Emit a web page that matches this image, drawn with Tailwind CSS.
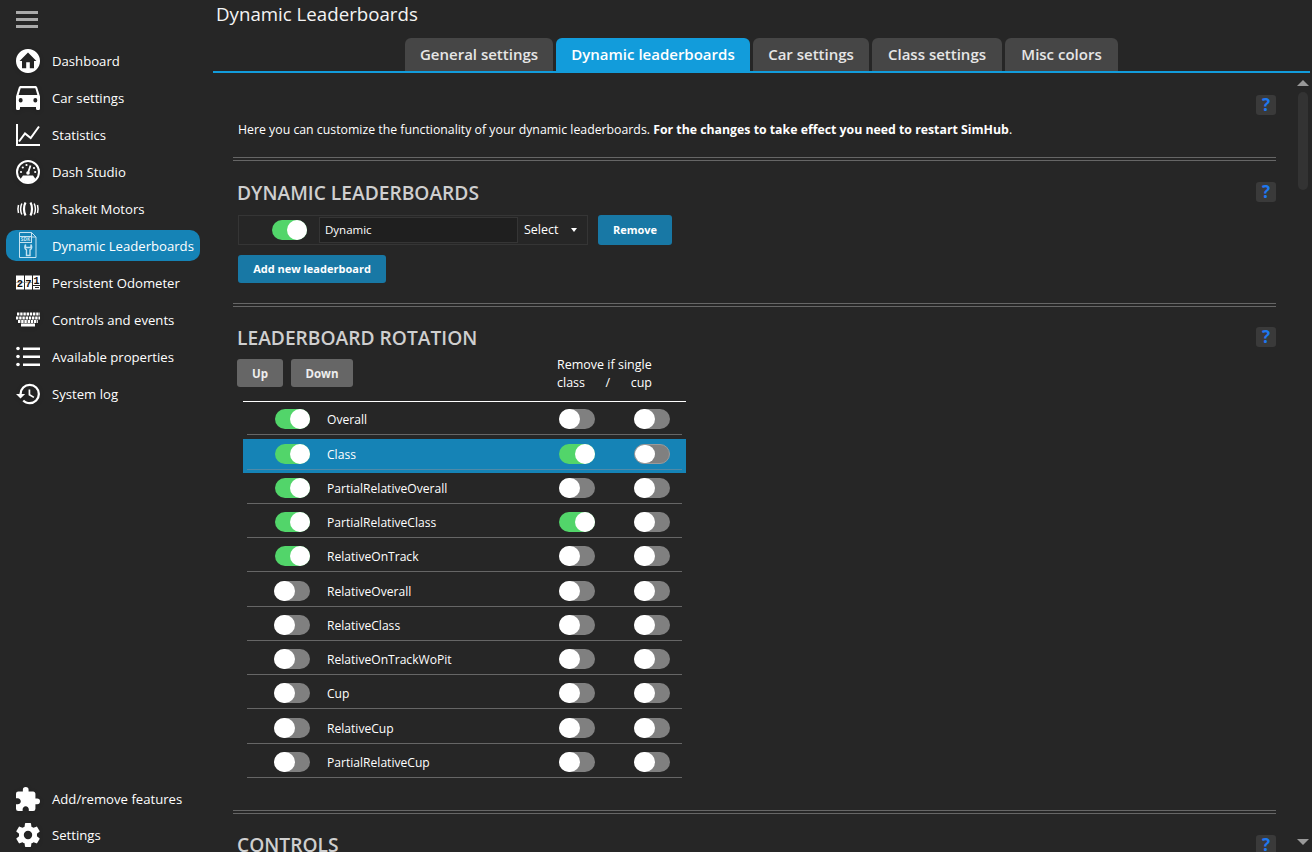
<!DOCTYPE html>
<html><head><meta charset="utf-8"><script src="https://cdn.jsdelivr.net/npm/@tailwindcss/browser@4"></script></head>
<body class="m-0 bg-[#262626] overflow-hidden font-['Open_Sans',sans-serif]">
<div class="flex w-[1312px] h-[852px] overflow-hidden text-white text-[12.1px]">
  <!-- sidebar -->
  <aside class="w-[213px] shrink-0 flex flex-col text-[13.15px]">
    <div class="h-[42px] pl-[16px] pt-[11px]">
      <div class="w-[22px] flex flex-col gap-[4px]"><div class="h-[3px] bg-[#aaa]"></div><div class="h-[3px] bg-[#aaa]"></div><div class="h-[3px] bg-[#aaa]"></div></div>
    </div>
    <nav class="flex flex-col">
      <a class="h-[37px] pl-[16px] flex items-center gap-[12px]"><svg class="w-[24px] h-[24px] drop-shadow-sm" viewBox="2 2 20 20" fill="#fff"><path d="M19.07,4.93C17.22,3 14.66,1.96 12,2C9.34,1.96 6.79,3 4.94,4.93C3,6.78 1.96,9.34 2,12C1.96,14.66 3,17.21 4.93,19.06C6.78,21 9.34,22.04 12,22C14.66,22.04 17.21,21 19.06,19.07C21,17.22 22.04,14.66 22,12C22.04,9.34 21,6.78 19.07,4.93M17,12V18H13.5V13H10.5V18H7V12H5L12,5L19,12H17Z"/></svg><span class="pt-[2px]">Dashboard</span></a>
      <a class="h-[37px] pl-[16px] flex items-center gap-[12px]"><svg class="w-[24px] h-[24px] drop-shadow-sm" viewBox="3 5 18 16" preserveAspectRatio="none" fill="#fff"><path d="M5,11L6.5,6.5H17.5L19,11M17.5,16A1.5,1.5 0 0,1 16,14.5A1.5,1.5 0 0,1 17.5,13A1.5,1.5 0 0,1 19,14.5A1.5,1.5 0 0,1 17.5,16M6.5,16A1.5,1.5 0 0,1 5,14.5A1.5,1.5 0 0,1 6.5,13A1.5,1.5 0 0,1 8,14.5A1.5,1.5 0 0,1 6.5,16M18.92,6C18.72,5.42 18.16,5 17.5,5H6.5C5.84,5 5.28,5.42 5.08,6L3,12V20A1,1 0 0,0 4,21H5A1,1 0 0,0 6,20V19H18V20A1,1 0 0,0 19,21H20A1,1 0 0,0 21,20V12L18.92,6Z"/></svg><span class="pt-[2px]">Car settings</span></a>
      <a class="h-[37px] pl-[16px] flex items-center gap-[12px]"><svg class="w-[24px] h-[24px]" viewBox="0 0 24 24" fill="none" stroke="#fff"><path stroke-width="2" d="M1 1V22H24"/><path stroke-width="2" d="M3 18.500L9 10.500L14.700 15L23 3.500"/></svg><span class="pt-[2px]">Statistics</span></a>
      <a class="h-[37px] pl-[16px] flex items-center gap-[12px]"><svg class="w-[24px] h-[24px] drop-shadow-sm" viewBox="0 0 24 24"><circle cx="12" cy="12" r="11" fill="none" stroke="#fff" stroke-width="2"/><path d="M4.500 19A10 10 0 0 0 19.500 19L17 15.500H7Z" fill="#fff"/><path d="M12 13L14.500 5.500" stroke="#fff" stroke-width="1.800"/><circle cx="12" cy="13" r="1.800" fill="#fff"/><g fill="#fff"><circle cx="5" cy="12" r="1.100"/><circle cx="6.800" cy="7.500" r="1.100"/><circle cx="10.500" cy="5" r="1.100"/><circle cx="18" cy="8" r="1.100"/><circle cx="19.200" cy="12" r="1.100"/></g></svg><span class="pt-[2px]">Dash Studio</span></a>
      <a class="h-[37px] pl-[16px] flex items-center gap-[12px]"><svg class="w-[24px] h-[24px]" viewBox="0 0 24 24" fill="none" stroke="#fff"><path stroke-width="2.200" d="M9.500 5.500C7.500 9 7.500 15 9.500 18.500M14.500 5.500C16.500 9 16.500 15 14.500 18.500"/><path stroke-width="1.500" d="M5.800 6.500C4.500 9.500 4.500 14.500 5.800 17.500M18.200 6.500C19.500 9.500 19.500 14.500 18.200 17.500M2.500 8C1.800 10.500 1.800 13.500 2.500 16M21.500 8C22.200 10.500 22.200 13.500 21.500 16"/></svg><span class="pt-[2px]">ShakeIt Motors</span></a>
      <a class="h-[31px] my-[3px] ml-[6px] w-[194px] pl-[10px] flex items-center gap-[12px] bg-[#1583b6] rounded-[10px]"><svg class="w-[24px] h-[28px]" viewBox="0 0 24 28" fill="none" stroke="#c4e2f0" stroke-width="1"><path d="M3.500 10.500V25.500H20V5L15.500 .5H3.500V4.500"/><path d="M15.500 .5V5H20"/><rect x="3.500" y="4.500" width="12" height="6"/><text x="9.500" y="9.300" text-anchor="middle" font-size="4.800" font-weight="700" fill="#c4e2f0" stroke="none" font-family="Open Sans">SDK</text><path stroke-width="1.400" d="M9.500 12.500C8 15.500 9.500 17.500 10.500 18V23.500H14V18C15 17.500 16.500 15.500 15 12.500V15.500H9.500Z"/></svg><span class="pt-[2px]">Dynamic Leaderboards</span></a>
      <a class="h-[37px] pl-[16px] flex items-center gap-[12px]"><svg class="w-[24px] h-[24px]" viewBox="0 0 24 24"><rect x="0" y="4.500" width="8" height="14" fill="#fff"/><rect x="9" y="4.500" width="7" height="14" fill="#fff"/><rect x="17" y="4.500" width="7" height="14" fill="#fff"/><path d="M0 11.500H16" stroke="#777" stroke-width=".5"/><path d="M17 14.500H24" stroke="#262626" stroke-width="1"/><path d="M19 16.500H23" stroke="#262626" stroke-width="1"/><text x="4" y="15.800" text-anchor="middle" font-size="10.500" font-weight="700" fill="#111" font-family="Liberation Mono">2</text><text x="12.500" y="15.800" text-anchor="middle" font-size="10.500" font-weight="700" fill="#111" font-family="Liberation Mono">7</text><text x="20.500" y="12.500" text-anchor="middle" font-size="10" font-weight="700" fill="#111" font-family="Liberation Mono">1</text></svg><span class="pt-[2px]">Persistent Odometer</span></a>
      <a class="h-[37px] pl-[16px] flex items-center gap-[12px]"><svg class="w-[24px] h-[24px] drop-shadow-sm" viewBox="0 0 24 24" fill="none" stroke="#fff"><path stroke-width="3" stroke-dasharray="2.400 .8" d="M1 6H24M0 10H24M2 13.500H22"/><path stroke-width="3" d="M5 17H19"/></svg><span class="pt-[2px]">Controls and events</span></a>
      <a class="h-[37px] pl-[16px] flex items-center gap-[12px]"><svg class="w-[24px] h-[24px]" viewBox="0 0 24 24" fill="#fff"><circle cx="2" cy="3.500" r="1.800"/><circle cx="2" cy="11.500" r="1.800"/><circle cx="2" cy="19.500" r="1.800"/><rect x="7" y="2.500" width="17" height="2.500"/><rect x="7" y="10.500" width="17" height="2.500"/><rect x="7" y="18.500" width="17" height="2.500"/></svg><span class="pt-[2px]">Available properties</span></a>
      <a class="h-[37px] pl-[16px] flex items-center gap-[12px]"><svg class="w-[24px] h-[24px] drop-shadow-sm" viewBox="1 3 21 18" fill="#fff"><path d="M13.5,8H12V13L16.28,15.54L17,14.33L13.5,12.25V8M13,3A9,9 0 0,0 4,12H1L4.96,16.03L9,12H6A7,7 0 0,1 13,5A7,7 0 0,1 20,12A7,7 0 0,1 13,19C11.07,19 9.32,18.21 8.06,16.94L6.64,18.36C8.27,20 10.5,21 13,21A9,9 0 0,0 22,12A9,9 0 0,0 13,3"/></svg><span class="pt-[2px]">System log</span></a>
    </nav>
    <div class="mt-auto flex flex-col">
      <a class="h-[37px] pl-[16px] flex items-center gap-[12px]"><svg class="w-[24px] h-[24px] drop-shadow-sm" viewBox="2 1 21 21" fill="#fff"><path d="M20.5,11H19V7C19,5.89 18.1,5 17,5H13V3.5A2.5,2.5 0 0,0 10.5,1A2.5,2.5 0 0,0 8,3.5V5H4A2,2 0 0,0 2,7V10.8H3.5C5,10.8 6.2,12 6.2,13.5C6.2,15 5,16.2 3.5,16.2H2V20A2,2 0 0,0 4,22H7.8V20.5C7.8,19 9,17.8 10.5,17.8C12,17.8 13.2,19 13.2,20.5V22H17A2,2 0 0,0 19,20V16H20.5A2.5,2.5 0 0,0 23,13.5A2.5,2.5 0 0,0 20.5,11Z"/></svg><span class="pt-[2px]">Add/remove features</span></a>
      <a class="h-[35px] pl-[16px] flex items-center gap-[12px]"><svg class="w-[24px] h-[24px] drop-shadow-sm" viewBox="2 2 20 20" fill="#fff"><path d="M12,15.5A3.5,3.5 0 0,1 8.5,12A3.5,3.5 0 0,1 12,8.5A3.5,3.5 0 0,1 15.5,12A3.5,3.5 0 0,1 12,15.5M19.43,12.97C19.47,12.65 19.5,12.33 19.5,12C19.5,11.67 19.47,11.34 19.43,11L21.54,9.37C21.73,9.22 21.78,8.95 21.66,8.73L19.66,5.27C19.54,5.05 19.27,4.96 19.05,5.05L16.56,6.05C16.04,5.66 15.5,5.32 14.87,5.07L14.5,2.42C14.46,2.18 14.25,2 14,2H10C9.75,2 9.54,2.18 9.5,2.42L9.13,5.07C8.5,5.32 7.96,5.66 7.44,6.05L4.95,5.05C4.73,4.96 4.46,5.05 4.34,5.27L2.34,8.73C2.21,8.95 2.27,9.22 2.46,9.37L4.57,11C4.53,11.34 4.5,11.67 4.5,12C4.5,12.33 4.53,12.65 4.57,12.97L2.46,14.63C2.27,14.78 2.21,15.05 2.34,15.27L4.34,18.73C4.46,18.95 4.73,19.03 4.95,18.95L7.44,17.94C7.96,18.34 8.5,18.68 9.13,18.93L9.5,21.58C9.54,21.82 9.75,22 10,22H14C14.25,22 14.46,21.82 14.5,21.58L14.87,18.93C15.5,18.67 16.04,18.34 16.56,17.94L19.05,18.95C19.27,19.03 19.54,18.95 19.66,18.73L21.66,15.27C21.78,15.05 21.73,14.78 21.54,14.63L19.43,12.97Z"/></svg><span class="pt-[2px]">Settings</span></a>
    </div>
  </aside>

  <!-- main -->
  <main class="flex-1 min-w-0 flex flex-col">
    <div class="h-[38px] pl-[3px] text-[18.7px] leading-[28px] text-[#f4f4f4]">Dynamic Leaderboards</div>
    <div class="w-[1097px] h-[35px] border-b-2 border-[#129cdb] flex justify-center gap-[3px] items-stretch text-[15px] font-semibold text-[#e6e6e6]">
      <div class="w-[148px] h-[33px] rounded-t-[6px] bg-[#464646] flex items-center justify-center">General settings</div>
      <div class="w-[194px] h-[33px] rounded-t-[6px] bg-[#129cdb] text-white flex items-center justify-center">Dynamic leaderboards</div>
      <div class="w-[116px] h-[33px] rounded-t-[6px] bg-[#464646] flex items-center justify-center">Car settings</div>
      <div class="w-[130px] h-[33px] rounded-t-[6px] bg-[#464646] flex items-center justify-center">Class settings</div>
      <div class="w-[113px] h-[33px] rounded-t-[6px] bg-[#464646] flex items-center justify-center">Misc colors</div>
    </div>
    <div class="flex flex-1 min-h-0 overflow-hidden">
      <div class="w-[1043px] ml-[20px] shrink-0 pt-[22px]">
        <div class="flex justify-end"><button class="w-[20px] h-[20px] rounded-[3px] bg-[#3a3a3a] text-[#1e78f0] font-bold text-[17px] leading-[20px]">?</button></div>
        <p class="mt-[5px] ml-[5px] h-[18px] pt-[1px] leading-[18px] text-[12.3px]">Here you can customize the functionality of your dynamic leaderboards. <b>For the changes to take effect you need to restart SimHub</b>.</p>

        <div class="mt-[19px] h-[4px] border-y border-[#666]"></div>
        <div class="mt-[17px] h-[28px] flex items-center justify-between"><h2 class="ml-[4px] pt-[2px] text-[19.2px] font-semibold text-[#cfcfcf]">DYNAMIC LEADERBOARDS</h2><button class="w-[20px] h-[20px] rounded-[3px] bg-[#3a3a3a] text-[#1e78f0] font-bold text-[17px] leading-[20px]">?</button></div>
        <div class="mt-[9px] ml-[5px] flex items-center gap-[10px]">
          <div class="w-[350px] h-[30px] border border-[#353535] flex items-center text-[12.5px]">
            <div class="w-[80px] flex justify-end pr-[12px]"><div class="w-[35px] h-[20px] rounded-full bg-[#52d56a] flex justify-end"><div class="w-[20px] h-[20px] rounded-full bg-white"></div></div></div>
            <div class="w-[199px] h-[26px] border border-[#353535] bg-[#1f1f1f] pl-[5px] leading-[24px] text-[11.5px]">Dynamic</div>
            <div class="flex-1 pl-[6px] pr-[10px] flex items-center justify-between"><span>Select</span><span class="w-0 h-0 border-x-[3.500px] border-x-transparent border-t-[4px] border-t-white"></span></div>
          </div>
          <button class="w-[74px] h-[30px] rounded-[3px] bg-[#1878a5] font-bold text-[11px] text-white">Remove</button>
        </div>
        <button class="block mt-[10px] ml-[5px] pt-[1px] w-[148px] h-[28px] rounded-[3px] bg-[#1878a5] font-bold text-[11px] text-white">Add new leaderboard</button>

        <div class="mt-[20px] h-[4px] border-y border-[#666]"></div>
        <div class="mt-[16px] h-[28px] flex items-center justify-between"><h2 class="ml-[4px] pt-[2px] text-[19.2px] font-semibold text-[#cfcfcf]">LEADERBOARD ROTATION</h2><button class="w-[20px] h-[20px] rounded-[3px] bg-[#3a3a3a] text-[#1e78f0] font-bold text-[17px] leading-[20px]">?</button></div>
        <div class="mt-[8px] ml-[4px] w-[449px] h-[28px] flex gap-[8px]">
          <button class="w-[46px] h-[28px] pt-[1px] rounded-[3px] bg-[#666] font-bold text-[11.5px] text-[#eee]">Up</button>
          <button class="w-[62px] h-[28px] pt-[1px] rounded-[3px] bg-[#666] font-bold text-[11.5px] text-[#eee]">Down</button>
          <div class="ml-[196px] -mt-[3px] w-[100px] text-[12.5px] leading-[18px]">
            <div class="whitespace-nowrap">Remove if single</div>
            <div class="flex justify-between w-[95px]"><span>class</span><span>/</span><span>cup</span></div>
          </div>
        </div>
        <div class="mt-[14px] ml-[10px] w-[443px] border-t border-white pt-[2.500px]">
          <div class="h-[34.250px] px-[4px] pb-[3.500px]"><div class="h-full border-b border-[#666] flex items-center"><div class="w-[28px]"></div><div class="w-[35px] h-[20px] rounded-full bg-[#52d56a] flex justify-end"><div class="w-[20px] h-[20px] rounded-full bg-white"></div></div><span class="ml-[17px] pt-[2px] w-[232px]">Overall</span><div class="w-[36px] h-[20px] rounded-full bg-[#808080]"><div class="w-[21px] h-[20px] rounded-full bg-white"></div></div><div class="w-[39px]"></div><div class="w-[36px] h-[20px] rounded-full bg-[#808080]"><div class="w-[21px] h-[20px] rounded-full bg-white"></div></div></div></div>
          <div class="h-[34.250px] px-[4px] pb-[3.500px] bg-[#1583b6]"><div class="h-full border-b border-[#4f8aa8] flex items-center"><div class="w-[28px]"></div><div class="w-[35px] h-[20px] rounded-full bg-[#52d56a] flex justify-end"><div class="w-[20px] h-[20px] rounded-full bg-white"></div></div><span class="ml-[17px] pt-[2px] w-[232px]">Class</span><div class="w-[36px] h-[20px] rounded-full bg-[#52d56a] flex justify-end"><div class="w-[20px] h-[20px] rounded-full bg-white"></div></div><div class="w-[39px]"></div><div class="w-[36px] h-[20px] rounded-full bg-[#808080] border border-[#9a9a9a]"><div class="w-[20px] h-[18px] rounded-full bg-white"></div></div></div></div>
          <div class="h-[34.250px] px-[4px] pb-[3.500px]"><div class="h-full border-b border-[#666] flex items-center"><div class="w-[28px]"></div><div class="w-[35px] h-[20px] rounded-full bg-[#52d56a] flex justify-end"><div class="w-[20px] h-[20px] rounded-full bg-white"></div></div><span class="ml-[17px] pt-[2px] w-[232px]">PartialRelativeOverall</span><div class="w-[36px] h-[20px] rounded-full bg-[#808080]"><div class="w-[21px] h-[20px] rounded-full bg-white"></div></div><div class="w-[39px]"></div><div class="w-[36px] h-[20px] rounded-full bg-[#808080]"><div class="w-[21px] h-[20px] rounded-full bg-white"></div></div></div></div>
          <div class="h-[34.250px] px-[4px] pb-[3.500px]"><div class="h-full border-b border-[#666] flex items-center"><div class="w-[28px]"></div><div class="w-[35px] h-[20px] rounded-full bg-[#52d56a] flex justify-end"><div class="w-[20px] h-[20px] rounded-full bg-white"></div></div><span class="ml-[17px] pt-[2px] w-[232px]">PartialRelativeClass</span><div class="w-[36px] h-[20px] rounded-full bg-[#52d56a] flex justify-end"><div class="w-[20px] h-[20px] rounded-full bg-white"></div></div><div class="w-[39px]"></div><div class="w-[36px] h-[20px] rounded-full bg-[#808080]"><div class="w-[21px] h-[20px] rounded-full bg-white"></div></div></div></div>
          <div class="h-[34.250px] px-[4px] pb-[3.500px]"><div class="h-full border-b border-[#666] flex items-center"><div class="w-[28px]"></div><div class="w-[35px] h-[20px] rounded-full bg-[#52d56a] flex justify-end"><div class="w-[20px] h-[20px] rounded-full bg-white"></div></div><span class="ml-[17px] pt-[2px] w-[232px]">RelativeOnTrack</span><div class="w-[36px] h-[20px] rounded-full bg-[#808080]"><div class="w-[21px] h-[20px] rounded-full bg-white"></div></div><div class="w-[39px]"></div><div class="w-[36px] h-[20px] rounded-full bg-[#808080]"><div class="w-[21px] h-[20px] rounded-full bg-white"></div></div></div></div>
          <div class="h-[34.250px] px-[4px] pb-[3.500px]"><div class="h-full border-b border-[#666] flex items-center"><div class="w-[27px]"></div><div class="w-[36px] h-[20px] rounded-full bg-[#808080]"><div class="w-[21px] h-[20px] rounded-full bg-white"></div></div><span class="ml-[17px] pt-[2px] w-[232px]">RelativeOverall</span><div class="w-[36px] h-[20px] rounded-full bg-[#808080]"><div class="w-[21px] h-[20px] rounded-full bg-white"></div></div><div class="w-[39px]"></div><div class="w-[36px] h-[20px] rounded-full bg-[#808080]"><div class="w-[21px] h-[20px] rounded-full bg-white"></div></div></div></div>
          <div class="h-[34.250px] px-[4px] pb-[3.500px]"><div class="h-full border-b border-[#666] flex items-center"><div class="w-[27px]"></div><div class="w-[36px] h-[20px] rounded-full bg-[#808080]"><div class="w-[21px] h-[20px] rounded-full bg-white"></div></div><span class="ml-[17px] pt-[2px] w-[232px]">RelativeClass</span><div class="w-[36px] h-[20px] rounded-full bg-[#808080]"><div class="w-[21px] h-[20px] rounded-full bg-white"></div></div><div class="w-[39px]"></div><div class="w-[36px] h-[20px] rounded-full bg-[#808080]"><div class="w-[21px] h-[20px] rounded-full bg-white"></div></div></div></div>
          <div class="h-[34.250px] px-[4px] pb-[3.500px]"><div class="h-full border-b border-[#666] flex items-center"><div class="w-[27px]"></div><div class="w-[36px] h-[20px] rounded-full bg-[#808080]"><div class="w-[21px] h-[20px] rounded-full bg-white"></div></div><span class="ml-[17px] pt-[2px] w-[232px]">RelativeOnTrackWoPit</span><div class="w-[36px] h-[20px] rounded-full bg-[#808080]"><div class="w-[21px] h-[20px] rounded-full bg-white"></div></div><div class="w-[39px]"></div><div class="w-[36px] h-[20px] rounded-full bg-[#808080]"><div class="w-[21px] h-[20px] rounded-full bg-white"></div></div></div></div>
          <div class="h-[34.250px] px-[4px] pb-[3.500px]"><div class="h-full border-b border-[#666] flex items-center"><div class="w-[27px]"></div><div class="w-[36px] h-[20px] rounded-full bg-[#808080]"><div class="w-[21px] h-[20px] rounded-full bg-white"></div></div><span class="ml-[17px] pt-[2px] w-[232px]">Cup</span><div class="w-[36px] h-[20px] rounded-full bg-[#808080]"><div class="w-[21px] h-[20px] rounded-full bg-white"></div></div><div class="w-[39px]"></div><div class="w-[36px] h-[20px] rounded-full bg-[#808080]"><div class="w-[21px] h-[20px] rounded-full bg-white"></div></div></div></div>
          <div class="h-[34.250px] px-[4px] pb-[3.500px]"><div class="h-full border-b border-[#666] flex items-center"><div class="w-[27px]"></div><div class="w-[36px] h-[20px] rounded-full bg-[#808080]"><div class="w-[21px] h-[20px] rounded-full bg-white"></div></div><span class="ml-[17px] pt-[2px] w-[232px]">RelativeCup</span><div class="w-[36px] h-[20px] rounded-full bg-[#808080]"><div class="w-[21px] h-[20px] rounded-full bg-white"></div></div><div class="w-[39px]"></div><div class="w-[36px] h-[20px] rounded-full bg-[#808080]"><div class="w-[21px] h-[20px] rounded-full bg-white"></div></div></div></div>
          <div class="h-[34.250px] px-[4px] pb-[3.500px]"><div class="h-full border-b border-[#666] flex items-center"><div class="w-[27px]"></div><div class="w-[36px] h-[20px] rounded-full bg-[#808080]"><div class="w-[21px] h-[20px] rounded-full bg-white"></div></div><span class="ml-[17px] pt-[2px] w-[232px]">PartialRelativeCup</span><div class="w-[36px] h-[20px] rounded-full bg-[#808080]"><div class="w-[21px] h-[20px] rounded-full bg-white"></div></div><div class="w-[39px]"></div><div class="w-[36px] h-[20px] rounded-full bg-[#808080]"><div class="w-[21px] h-[20px] rounded-full bg-white"></div></div></div></div>
        </div>
        <div class="mt-[29px] h-[4px] border-y border-[#666]"></div>
        <div class="mt-[17px] h-[28px] flex items-center justify-between"><h2 class="ml-[4px] text-[19.2px] font-semibold text-[#cfcfcf]">CONTROLS</h2><button class="w-[20px] h-[20px] rounded-[3px] bg-[#3a3a3a] text-[#1e78f0] font-bold text-[17px] leading-[20px]">?</button></div>
      </div>
      <div class="ml-[21px] w-[12px] shrink-0 flex flex-col items-center pt-[7px] pb-[7px]">
        <div class="w-0 h-0 border-x-[6px] border-x-transparent border-b-[6px] border-b-[#999]"></div>
        <div class="mt-[6px] w-[10px] h-[98px] rounded-[5px] bg-[#333]"></div>
        <div class="mt-auto w-0 h-0 border-x-[6px] border-x-transparent border-t-[6px] border-t-[#999]"></div>
      </div>
    </div>
  </main>
</div>
</body></html>
